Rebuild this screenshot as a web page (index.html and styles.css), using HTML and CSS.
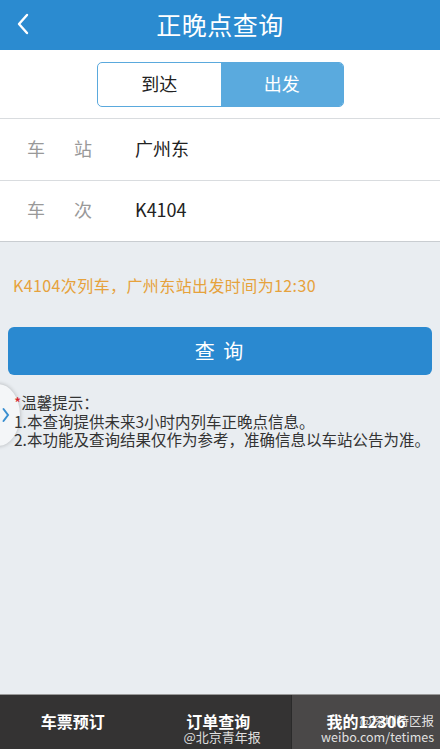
FILE: index.html
```html
<!DOCTYPE html>
<html lang="zh-CN">
<head>
    <meta charset="UTF-8">
    <meta name="viewport" content="width=device-width, initial-scale=1.0">
    <title>正晚点查询</title>
    <link rel="stylesheet" href="styles.css">
</head>
<body>
    <div class="page">
        <!-- Header -->
        <div class="header">
            <svg class="back" width="14" height="22" viewBox="0 0 14 22">
                <path d="M11 2 L3 11 L11 20" fill="none" stroke="#fff" stroke-width="2.4" stroke-linecap="round" stroke-linejoin="round"/>
            </svg>
            <h1>正晚点查询</h1>
        </div>

        <!-- Switch -->
        <div class="switch-wrap">
            <div class="switch">
                <div class="switch-item">到达</div>
                <div class="switch-item active">出发</div>
            </div>
        </div>

        <!-- Form -->
        <div class="form">
            <div class="row">
                <div class="label"><span>车</span><span>站</span></div>
                <div class="value">广州东</div>
            </div>
            <div class="row">
                <div class="label"><span>车</span><span>次</span></div>
                <div class="value">K4104</div>
            </div>
        </div>

        <div class="content">
            <p class="result">K4104次列车，广州东站出发时间为12:30</p>
            <button class="query-btn">查 询</button>

            <div class="tips">
                <p><span class="star">*</span>温馨提示：</p>
                <p>1.本查询提供未来3小时内列车正晚点信息。</p>
                <p>2.本功能及查询结果仅作为参考，准确信息以车站公告为准。</p>
            </div>
        </div>

        <!-- side handle -->
        <div class="side-handle">
            <svg width="8" height="16" viewBox="0 0 8 16">
                <path d="M1.5 2 L6 8 L1.5 14" fill="none" stroke="#3a8fd0" stroke-width="2" stroke-linecap="round"/>
            </svg>
        </div>

        <!-- Bottom nav -->
        <div class="tabbar">
            <div class="tab">车票预订</div>
            <div class="tab">订单查询<span class="mark mark-a">@北京青年报</span></div>
            <div class="tab active">我的12306<span class="mark mark-b">@深圳特区报<br>weibo.com/tetimes</span></div>
        </div>
    </div>
</body>
</html>
```

FILE: styles.css
```css
/* Reset */
* {
    margin: 0;
    padding: 0;
    box-sizing: border-box;
}

body {
    font-family: "Noto Sans CJK SC", "Noto Sans", sans-serif;
    background: #e9edf1;
    color: #333;
}

.page {
    position: relative;
    width: 440px;
    height: 749px;
    display: flex;
    flex-direction: column;
    overflow: hidden;
}

/* Header */
.header {
    height: 50px;
    background: #2b8bd0;
    display: flex;
    align-items: center;
    justify-content: center;
    position: relative;
}

.header .back {
    position: absolute;
    left: 16px;
    top: 13px;
}

.header h1 {
    color: #fff;
    font-size: 25px;
    font-weight: 400;
    letter-spacing: 0.5px;
    padding-bottom: 2px;
}

/* Switch */
.switch-wrap {
    background: #fff;
    height: 69px;
    display: flex;
    justify-content: center;
    align-items: center;
    border-bottom: 1px solid #d9dcdf;
}

.switch {
    display: flex;
    width: 247px;
    height: 45px;
    border: 1px solid #5aa9dd;
    border-radius: 5px;
    overflow: hidden;
    margin-left: 1px;
}

.switch-item {
    flex: 1;
    display: flex;
    align-items: center;
    justify-content: center;
    font-size: 18px;
    color: #222;
    padding-bottom: 2px;
}

.switch-item.active {
    background: #5aaade;
    color: #fff;
}

/* Form rows */
.form {
    background: #fff;
    border-bottom: 1px solid #c9cdd1;
}

.row {
    height: 61px;
    display: flex;
    align-items: center;
    padding-left: 27px;
    padding-bottom: 4px;
}

.row + .row {
    border-top: 1px solid #d9dcdf;
}

.label {
    width: 108px;
    display: flex;
    gap: 29px;
    font-size: 18px;
    color: #999;
}

.value {
    font-size: 18px;
    color: #222;
}

/* Content */
.content {
    flex: 1;
    padding: 0 8px;
}

.result {
    margin-top: 31px;
    padding-left: 5px;
    font-size: 16px;
    color: #e6a23c;
    letter-spacing: 0.4px;
}

.query-btn {
    display: block;
    width: 100%;
    height: 48px;
    margin-top: 30px;
    border: none;
    border-radius: 6px;
    background: #2a89d0;
    color: #fff;
    font-family: inherit;
    font-size: 20px;
    letter-spacing: 2px;
    padding-bottom: 2px;
}

.tips {
    position: relative;
    z-index: 2;
    margin-top: 18px;
    padding-left: 6px;
    font-size: 15.5px;
    line-height: 18.5px;
    color: #333;
}

.tips .star {
    color: #d8232a;
}

/* side handle */
.side-handle {
    position: absolute;
    z-index: 1;
    left: -24px;
    top: 384px;
    width: 44px;
    height: 62px;
    border-radius: 50%;
    background: #f4f6f8;
    box-shadow: 0 0 4px rgba(0, 0, 0, 0.25);
    display: flex;
    align-items: center;
    justify-content: flex-end;
    padding-right: 10px;
}

/* Tab bar */
.tabbar {
    height: 55px;
    display: flex;
    background: #343333;
    border-top: 1px solid #9a9a9a;
}

.tab {
    position: relative;
    flex: 1;
    display: flex;
    justify-content: center;
    align-items: center;
    color: #fff;
    font-size: 16px;
    font-weight: 700;
    padding-bottom: 3px;
}

.tab.active {
    flex: 0 0 149px;
    background: #4a4848;
    border-left: 1px solid #2a2a2a;
}

.mark {
    position: absolute;
    color: rgba(255, 255, 255, 0.85);
    font-weight: 400;
    font-size: 13px;
    line-height: 16px;
    text-align: right;
}

.mark-a {
    top: 34px;
    left: 38px;
}

.mark-b {
    top: 18px;
    right: 6px;
    font-size: 12.5px;
}
```
